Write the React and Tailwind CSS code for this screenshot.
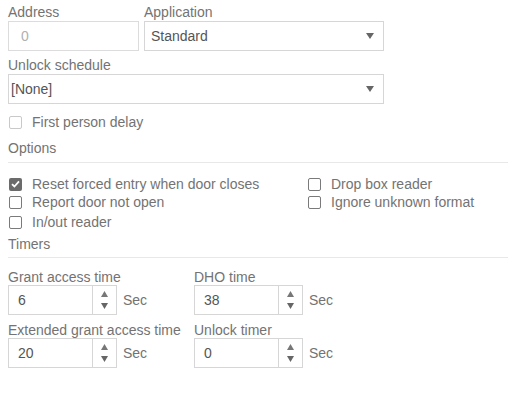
import React from "react";

function Check({ checked = false, disabled = false }) {
  if (checked) {
    return (
      <span className="inline-flex h-[13px] w-[13px] shrink-0 items-center justify-center rounded-[2px] bg-[#6b6b6b]">
        <svg width="9" height="8" viewBox="0 0 9 8">
          <path d="M1 4.2 L3.4 6.5 L8 1.4" fill="none" stroke="#fff" strokeWidth="1.8" />
        </svg>
      </span>
    );
  }
  return (
    <span
      className={
        disabled
          ? "inline-block h-[13px] w-[13px] shrink-0 rounded-[2px] border border-[#c9c9c9] bg-white"
          : "inline-block h-[13px] w-[13px] shrink-0 rounded-[2px] border border-[#7a7a7a] bg-white"
      }
    />
  );
}

function CheckRow({ label, checked, disabled, className = "" }) {
  return (
    <div className={"flex h-4 items-center " + className}>
      <span className="ml-px flex w-[23px] items-center">
        <Check checked={checked} disabled={disabled} />
      </span>
      <span className="leading-4">{label}</span>
    </div>
  );
}

function Caret() {
  return (
    <svg width="8" height="6" viewBox="0 0 8 6">
      <path d="M0 0 H8 L4 6 Z" fill="#666" />
    </svg>
  );
}

function Spin({ label, value }) {
  return (
    <div className="flex flex-col">
      <div className="h-4 leading-4">{label}</div>
      <div className="flex items-center">
        <div className="flex h-[30px] w-[109px] border border-[#d6d6d6] bg-white">
          <div className="flex flex-1 items-center pl-[9px] text-[#555]">{value}</div>
          <div className="flex w-[24px] flex-col items-center justify-center gap-[6px] border-l border-[#d6d6d6]">
            <svg width="7" height="6" viewBox="0 0 7 6">
              <path d="M3.5 0 L7 6 H0 Z" fill="#777" />
            </svg>
            <svg width="7" height="6" viewBox="0 0 7 6">
              <path d="M0 0 H7 L3.5 6 Z" fill="#666" />
            </svg>
          </div>
        </div>
        <span className="ml-[6px]">Sec</span>
      </div>
    </div>
  );
}

export default function App() {
  return (
    <div
      className="h-[420px] w-[508px] bg-white pl-2 text-[14px] text-[#737373]"
      style={{ fontFamily: '"Liberation Sans", Arial, sans-serif' }}
    >
      <div className="flex gap-[5px] pt-1">
        <div className="flex flex-col">
          <div className="mb-px h-4 leading-4">Address</div>
          <div className="flex h-[30px] w-[131px] items-center border border-[#dcdcdc] pl-3 text-[#b0b0b0]">
            0
          </div>
        </div>
        <div className="flex flex-col">
          <div className="mb-px h-4 leading-4">Application</div>
          <div className="flex h-[30px] w-[240px] items-center justify-between border border-[#d6d6d6] pl-[6px] pr-[9px] text-[#555]">
            <span>Standard</span>
            <Caret />
          </div>
        </div>
      </div>

      <div className="mt-[6px] mb-px h-4 leading-4">Unlock schedule</div>
      <div className="flex h-[30px] w-[376px] items-center justify-between border border-[#d6d6d6] pl-[2px] pr-[9px] text-[#555]">
        <span>[None]</span>
        <Caret />
      </div>

      <CheckRow className="mt-[10px]" label="First person delay" disabled />

      <div className="mt-[10px] h-4 leading-4">Options</div>
      <div className="mt-[6px] border-t border-[#e8e8e8]" />

      <div className="mt-[13px] flex">
        <div className="flex w-[299px] flex-col">
          <CheckRow label="Reset forced entry when door closes" checked />
          <CheckRow className="mt-[2px]" label="Report door not open" />
          <CheckRow className="mt-[4px]" label="In/out reader" />
        </div>
        <div className="flex flex-col">
          <CheckRow label="Drop box reader" />
          <CheckRow className="mt-[2px]" label="Ignore unknown format" />
        </div>
      </div>

      <div className="mt-[6px] h-4 leading-4">Timers</div>
      <div className="mt-[5px] border-t border-[#e8e8e8]" />

      <div className="mt-[11px] grid w-[372px] grid-cols-[186px_186px] gap-y-[7px]">
        <Spin label="Grant access time" value="6" />
        <Spin label="DHO time" value="38" />
        <Spin label="Extended grant access time" value="20" />
        <Spin label="Unlock timer" value="0" />
      </div>
    </div>
  );
}
